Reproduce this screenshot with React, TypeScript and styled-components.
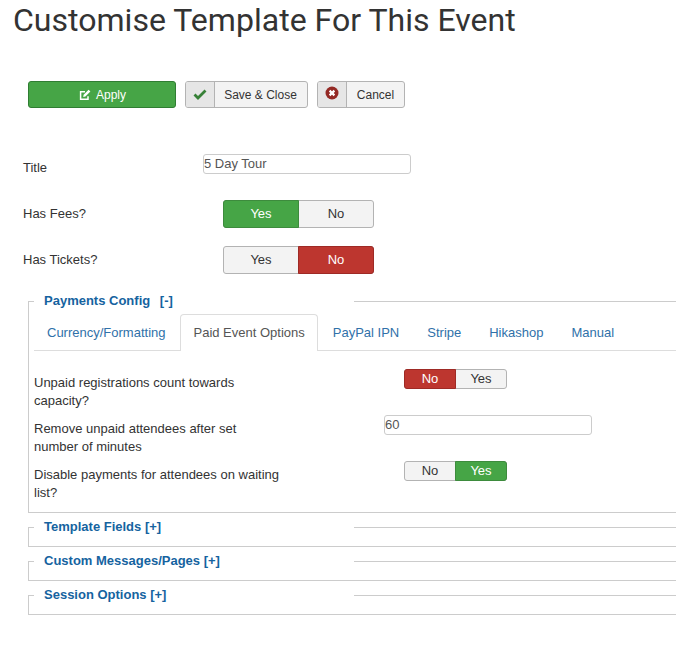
import React from "react";
import styled, { createGlobalStyle } from "styled-components";

const Global = createGlobalStyle`
  html, body { margin: 0; padding: 0; background: #fff; }
  body { font-family: "Liberation Sans", Arial, sans-serif; font-size: 13px; line-height: 18px; color: #333; }
`;

const Page = styled.div`
  width: 676px;
  height: 654px;
  overflow: hidden;
  box-sizing: border-box;
`;

const Heading = styled.h1`
  margin: 0;
  padding: 0 0 0 13px;
  height: 81px;
  font-family: Roboto, sans-serif;
  font-weight: 400;
  font-size: 32.06px;
  line-height: 41px;
  color: #333;
`;

const Toolbar = styled.div`
  display: flex;
  gap: 9px;
  padding-left: 28px;
  height: 27px;
`;

const ApplyButton = styled.button`
  width: 148px;
  height: 27px;
  display: flex;
  align-items: center;
  justify-content: center;
  gap: 5px;
  padding: 1px 0 0 1px;
  border: 1px solid #2f7d32;
  border-radius: 3px;
  background: #46a546;
  color: #fff;
  font: 12px/18px "Liberation Sans", sans-serif;
`;

const ToolButton = styled.button`
  height: 27px;
  display: flex;
  align-items: stretch;
  padding: 0;
  border: 1px solid #b3b3b3;
  border-radius: 3px;
  background: #f3f3f3;
  color: #333;
  font: 12px/27px "Liberation Sans", sans-serif;
  overflow: hidden;
`;

const ToolIcon = styled.span<{ $lift: number }>`
  width: 29px;
  display: flex;
  align-items: center;
  justify-content: center;
  padding-bottom: ${(p) => p.$lift}px;
  box-sizing: border-box;
  background: #e6e6e6;
  border-right: 1px solid #b3b3b3;
`;

const ToolLabel = styled.span<{ $width: number; $nudge: number }>`
  box-sizing: border-box;
  width: ${(p) => p.$width}px;
  padding-right: ${(p) => p.$nudge}px;
  text-align: center;
`;

const FormArea = styled.div`
  padding: 46px 0 0 23px;
`;

const TopRow = styled.div`
  display: flex;
  height: 46px;
`;

const TopLabel = styled.label`
  width: 180px;
  padding-top: 5px;
  color: #333;
`;

const TextInput = styled.div<{ $left: number }>`
  box-sizing: border-box;
  width: 208px;
  height: 20px;
  margin-left: ${(p) => p.$left}px;
  padding-left: 0;
  border: 1px solid #ccc;
  border-radius: 3px;
  font-size: 13px;
  line-height: 17px;
  color: #555;
`;

const Toggle = styled.div<{ $left: number; $w: number; $h: number }>`
  box-sizing: border-box;
  display: flex;
  width: ${(p) => p.$w}px;
  height: ${(p) => p.$h}px;
  margin-left: ${(p) => p.$left}px;
  border: 1px solid #b3b3b3;
  border-radius: 3px;
  background: #f3f3f3;
`;

const ToggleSide = styled.span<{ $tone?: "green" | "red" }>`
  box-sizing: border-box;
  flex: ${(p) => (p.$tone ? "1 0 2px" : "1 0 0")};
  display: flex;
  align-items: center;
  justify-content: center;
  margin: ${(p) => (p.$tone ? "-1px 0" : "0")};
  border: ${(p) => (p.$tone === "green" ? "1px solid #3d8b3d" : p.$tone === "red" ? "1px solid #9e2a25" : "0")};
  background: ${(p) => (p.$tone === "green" ? "#46a546" : p.$tone === "red" ? "#bd362f" : "transparent")};
  color: ${(p) => (p.$tone ? "#fff" : "#333")};
  font-size: 13px;
  &:first-child {
    margin-left: ${(p) => (p.$tone ? "-1px" : "0")};
    border-radius: 3px 0 0 3px;
  }
  &:last-child {
    margin-right: ${(p) => (p.$tone ? "-1px" : "0")};
    border-radius: 0 3px 3px 0;
  }
`;

const Section = styled.fieldset<{ $height: number }>`
  box-sizing: border-box;
  margin: 0 0 0 5px;
  padding: 0 0 0 5px;
  min-width: 0;
  width: 700px;
  height: ${(p) => p.$height}px;
  border: 0;
  border-top: 1px solid #ccc;
  border-left: 1px solid #ccc;
  border-bottom: 1px solid #ccc;
  & + & {
    margin-top: 5px;
  }
`;

const Legend = styled.legend`
  box-sizing: border-box;
  width: 320px;
  height: 18px;
  padding: 0 0 0 10px;
  font-weight: 700;
  font-size: 13px;
  line-height: 18px;
  color: #15639f;
`;

const Toggler = styled.span`
  margin-left: 6px;
  color: #15639f;
`;

const Tabs = styled.div`
  display: flex;
  height: 36px;
  margin-top: 4px;
  border-bottom: 1px solid #ddd;
  box-sizing: content-box;
`;

const Tab = styled.a<{ $active?: boolean }>`
  box-sizing: border-box;
  padding: 9px 12px 0;
  margin-right: 2px;
  border: 1px solid ${(p) => (p.$active ? "#ddd" : "transparent")};
  border-bottom: 0;
  border-radius: 4px 4px 0 0;
  background: #fff;
  color: ${(p) => (p.$active ? "#555" : "#3071a9")};
  margin-bottom: ${(p) => (p.$active ? "-1px" : "0")};
  height: ${(p) => (p.$active ? "37px" : "36px")};
  font-size: 13px;
  white-space: nowrap;
`;

const Options = styled.div`
  padding-top: 18px;
`;

const OptionRow = styled.div`
  display: flex;
  height: 46px;
`;

const OptionLabel = styled.label`
  width: 250px;
  padding-top: 5px;
  color: #333;
  line-height: 18px;
`;

const EditIcon = () => (
  <svg width="12" height="12" viewBox="0 0 12 12" fill="none">
    <path d="M9 7.2V10.2H1.6V2.8H6" stroke="#fff" strokeWidth="1.5" />
    <path d="M4.2 7.9 L4.6 5.8 L9.6 0.8 L11.4 2.6 L6.4 7.6 Z" fill="#fff" />
  </svg>
);

const CheckIcon = () => (
  <svg width="14" height="12" viewBox="0 0 14 12">
    <path d="M1.5 6.5 L5 10 L12.5 2.5" fill="none" stroke="#378137" strokeWidth="2.8" />
  </svg>
);

const CancelIcon = () => (
  <svg width="14" height="14" viewBox="0 0 14 14">
    <circle cx="7" cy="7" r="6.5" fill="#942a25" />
    <path d="M4.6 4.6 L9.4 9.4 M9.4 4.6 L4.6 9.4" stroke="#fff" strokeWidth="2.2" />
  </svg>
);

export default function App() {
  return (
    <Page>
      <Global />
      <Heading>Customise Template For This Event</Heading>
      <Toolbar>
        <ApplyButton><EditIcon />Apply</ApplyButton>
        <ToolButton><ToolIcon $lift={2}><CheckIcon /></ToolIcon><ToolLabel $width={92} $nudge={1}>Save &amp; Close</ToolLabel></ToolButton>
        <ToolButton><ToolIcon $lift={3}><CancelIcon /></ToolIcon><ToolLabel $width={57} $nudge={0}>Cancel</ToolLabel></ToolButton>
      </Toolbar>
      <FormArea>
        <TopRow>
          <TopLabel>Title</TopLabel>
          <TextInput $left={0}>5 Day Tour</TextInput>
        </TopRow>
        <TopRow>
          <TopLabel>Has Fees?</TopLabel>
          <Toggle $left={20} $w={151} $h={28}>
            <ToggleSide $tone="green">Yes</ToggleSide>
            <ToggleSide>No</ToggleSide>
          </Toggle>
        </TopRow>
        <TopRow>
          <TopLabel>Has Tickets?</TopLabel>
          <Toggle $left={20} $w={151} $h={28}>
            <ToggleSide>Yes</ToggleSide>
            <ToggleSide $tone="red">No</ToggleSide>
          </Toggle>
        </TopRow>
        <Section $height={221}>
          <Legend>Payments Config <Toggler>[-]</Toggler></Legend>
          <Tabs>
            <Tab>Currency/Formatting</Tab>
            <Tab $active>Paid Event Options</Tab>
            <Tab>PayPal IPN</Tab>
            <Tab>Stripe</Tab>
            <Tab>Hikashop</Tab>
            <Tab>Manual</Tab>
          </Tabs>
          <Options>
            <OptionRow>
              <OptionLabel>Unpaid registrations count towards capacity?</OptionLabel>
              <Toggle $left={120} $w={103} $h={20}>
                <ToggleSide $tone="red">No</ToggleSide>
                <ToggleSide>Yes</ToggleSide>
              </Toggle>
            </OptionRow>
            <OptionRow>
              <OptionLabel>Remove unpaid attendees after set number of minutes</OptionLabel>
              <TextInput $left={100}>60</TextInput>
            </OptionRow>
            <OptionRow>
              <OptionLabel>Disable payments for attendees on waiting list?</OptionLabel>
              <Toggle $left={120} $w={103} $h={20}>
                <ToggleSide>No</ToggleSide>
                <ToggleSide $tone="green">Yes</ToggleSide>
              </Toggle>
            </OptionRow>
          </Options>
        </Section>
        <Section $height={29}><Legend>Template Fields [+]</Legend></Section>
        <Section $height={29}><Legend>Custom Messages/Pages [+]</Legend></Section>
        <Section $height={29}><Legend>Session Options [+]</Legend></Section>
      </FormArea>
    </Page>
  );
}
